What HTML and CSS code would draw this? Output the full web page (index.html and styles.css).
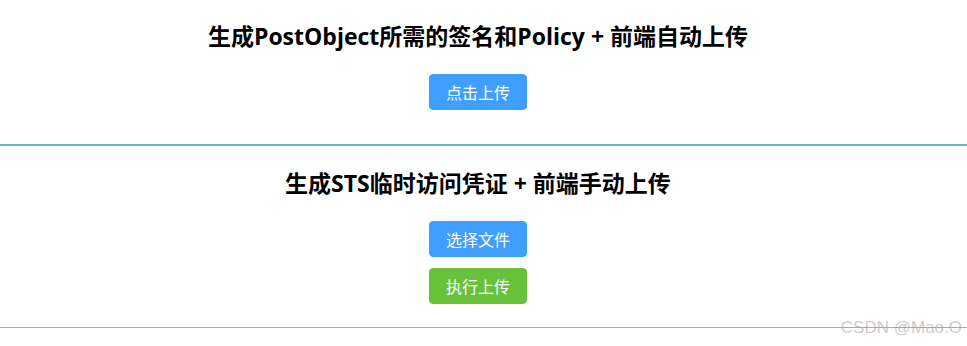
FILE: index.html
```html
<!DOCTYPE html>
<html lang="zh-CN">
  <head>
    <meta charset="UTF-8" />
    <meta name="viewport" content="width=device-width, initial-scale=1.0" />
    <title>OSS 上传</title>
    <link rel="stylesheet" href="styles.css">
  </head>
  <body>
    <div class="section section-post">
      <h2 class="title">生成PostObject所需的签名和Policy + 前端自动上传</h2>
      <div class="actions">
        <button class="btn btn-primary">点击上传</button>
      </div>
    </div>
    <div class="section section-sts">
      <h2 class="title">生成STS临时访问凭证 + 前端手动上传</h2>
      <div class="actions">
        <button class="btn btn-primary">选择文件</button>
        <button class="btn btn-success">执行上传</button>
      </div>
    </div>
    <div class="watermark">CSDN @Mao.O</div>
  </body>
</html>
```

FILE: styles.css
```css
body {
  margin: 0;
  font-family: "Open Sans", "Noto Sans CJK SC", sans-serif;
  color: #000;
  background-color: #fff;
}
.section {
  text-align: center;
}
.section-post {
  padding: 21px 0 34px;
  border-bottom: 2px solid #6aafd6;
}
.section-sts {
  padding: 22px 0 23px;
  border-bottom: 1px solid #8fb2c8;
}
.title {
  margin: 0 0 23px;
  padding-right: 11px;
  font-size: 23px;
  line-height: 30px;
  font-weight: bold;
}
.actions {
  display: flex;
  flex-direction: column;
  align-items: center;
  gap: 11px;
  padding-right: 11px;
}
.btn {
  border: 1px solid;
  border-radius: 4px;
  padding: 9px 16px;
  font-size: 16px;
  line-height: 16px;
  font-family: "Noto Sans CJK SC", sans-serif;
  color: #fff;
  cursor: pointer;
}
.btn-primary {
  background-color: #409eff;
  border-color: #409eff;
}
.btn-success {
  background-color: #67c23a;
  border-color: #67c23a;
}
.watermark {
  position: absolute;
  right: 5px;
  top: 318px;
  font-family: "Liberation Sans", sans-serif;
  font-size: 17px;
  color: rgba(160, 160, 160, 0.55);
}
```
